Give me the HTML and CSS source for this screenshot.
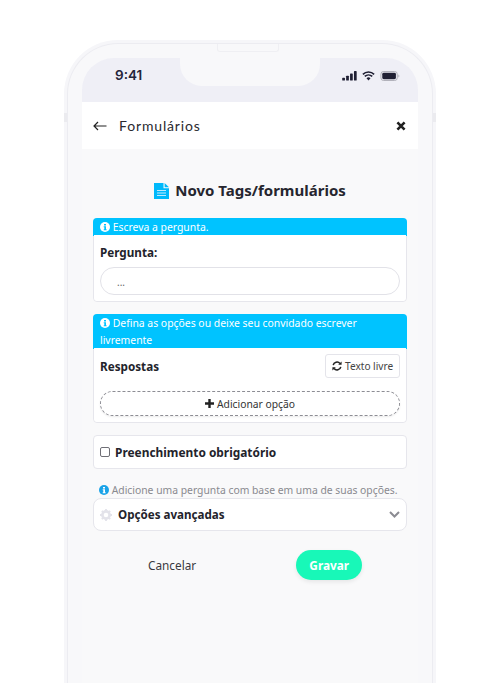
FILE: index.html
```html
<!DOCTYPE html>
<html lang="pt">
<head>
<meta charset="utf-8">
<title>Formulários</title>
<link rel="stylesheet" href="styles.css">
</head>
<body>
<div class="phone">
  <span class="tick tick-left"></span>
  <span class="tick tick-right"></span>
  <span class="speaker"></span>
  <div class="bezel">
    <div class="screen">
      <div class="status">
        <span class="time">9:41</span>
        <div class="notch"></div>
        <div class="status-icons">
          <svg width="15" height="10" viewBox="0 0 16 11"><rect x="0" y="7.5" width="3" height="3" rx=".7"/><rect x="4.3" y="5.2" width="3" height="5.3" rx=".7"/><rect x="8.6" y="2.7" width="3" height="7.8" rx=".7"/><rect x="12.9" y="0" width="3" height="10.5" rx=".7"/></svg>
          <svg width="13" height="10" viewBox="0 0 15 11"><path d="M1 3.6a9.3 9.3 0 0 1 13 0M3.2 6a6.2 6.2 0 0 1 8.6 0" fill="none" stroke="#1f1f33" stroke-width="1.8"/><path d="M5.2 8.2a3.2 3.2 0 0 1 4.6 0L7.5 10.6z"/></svg>
          <svg width="20" height="10" viewBox="0 0 21 11"><rect x=".5" y=".5" width="18" height="10" rx="3" fill="none" stroke="#a9a9b3"/><rect x="2" y="2" width="15" height="7" rx="1.6"/><path d="M19.8 3.8c.7.3.9 1 .9 1.7s-.2 1.4-.9 1.7z" fill="#a9a9b3"/></svg>
        </div>
      </div>
      <header class="topbar">
        <div class="topbar-left">
          <svg class="back" width="14" height="10" viewBox="0 0 14 10"><path d="M5 1 1 5l4 4M1 5h12.5" fill="none" stroke="#222" stroke-width="1.2"/></svg>
          <span class="topbar-title">Formulários</span>
        </div>
        <svg width="10" height="10" viewBox="0 0 10 10"><path d="M1.4 1.4l7.2 7.2M8.6 1.4 1.4 8.6" stroke="#222" stroke-width="2.6" fill="none"/></svg>
      </header>
      <main class="content">
        <h1 class="title">
          <svg width="15" height="16" viewBox="0 0 15 16"><path d="M0 0h9.5v5.2H15V16H0z" fill="#00b9fb"/><path d="M10.6 0 15 4.2h-4.4z" fill="#00b9fb"/><path d="M3 7.5h9M3 10h9M3 12.5h9" stroke="#bfeaff" stroke-width="1"/></svg>
          Novo Tags/formulários
        </h1>

        <section class="card">
          <div class="notice"><svg class="info" viewBox="0 0 10 10"><circle cx="5" cy="5" r="5" fill="#fff"/><path d="M4 2h2v1.6H4zM3.7 4.3H6v3h.6v.9H3.7v-.9h.6V5.2h-.6z" fill="#00c3ff"/></svg> Escreva a pergunta.</div>
          <div class="card-body">
            <label class="strong q-label">Pergunta:</label>
            <div class="input">...</div>
          </div>
        </section>

        <section class="card">
          <div class="notice"><svg class="info" viewBox="0 0 10 10"><circle cx="5" cy="5" r="5" fill="#fff"/><path d="M4 2h2v1.6H4zM3.7 4.3H6v3h.6v.9H3.7v-.9h.6V5.2h-.6z" fill="#00c3ff"/></svg> Defina as opções ou deixe seu convidado escrever livremente</div>
          <div class="card-body answers">
            <div class="answers-row">
              <span class="strong">Respostas</span>
              <button class="free-btn"><svg width="10" height="10" viewBox="0 0 10 10"><path d="M1.2 4.2A3.9 3.9 0 0 1 8 2.4M8.8 5.8A3.9 3.9 0 0 1 2 7.6" fill="none" stroke="#222" stroke-width="1.5"/><path d="M9.6.4v3.4H6.2zM.4 9.6V6.2h3.4z" fill="#222"/></svg> Texto livre</button>
            </div>
            <button class="add-btn"><svg width="9" height="9" viewBox="0 0 9 9"><path d="M4.5 0v9M0 4.5h9" stroke="#222" stroke-width="2.4"/></svg> Adicionar opção</button>
          </div>
        </section>

        <label class="card check-card">
          <span class="box"></span>
          <span class="strong wide">Preenchimento obrigatório</span>
        </label>

        <p class="hint"><svg class="info" viewBox="0 0 10 10"><circle cx="5" cy="5" r="5" fill="#1aa3e8"/><path d="M4 2h2v1.6H4zM3.7 4.3H6v3h.6v.9H3.7v-.9h.6V5.2h-.6z" fill="#fff"/></svg> Adicione uma pergunta com base em uma de suas opções.</p>

        <div class="card advanced">
          <div class="advanced-left">
            <svg width="12" height="12" viewBox="0 0 12 12"><circle cx="6" cy="6" r="3.6" fill="none" stroke="#e3e3ea" stroke-width="2.6"/><path d="M6 0v2M6 10v2M0 6h2M10 6h2M1.8 1.8l1.4 1.4M8.8 8.8l1.4 1.4M10.2 1.8 8.8 3.2M3.2 8.8l-1.4 1.4" stroke="#e3e3ea" stroke-width="1.8"/></svg>
            <span class="strong adv-label">Opções avançadas</span>
          </div>
          <svg width="11" height="7" viewBox="0 0 11 7"><path d="M1 1l4.5 4.5L10 1" fill="none" stroke="#8b8b92" stroke-width="2"/></svg>
        </div>

        <div class="actions">
          <button class="cancel">Cancelar</button>
          <button class="save">Gravar</button>
        </div>
      </main>
    </div>
  </div>
</div>
</body>
</html>
```

FILE: styles.css
```css
* { box-sizing: border-box; }
html, body { margin: 0; height: 683px; overflow: hidden; background: #fff; }
body { font-family: "Noto Sans", sans-serif; color: #23232b; padding-top: 40px; }
svg { display: block; flex: none; }
button { font-family: inherit; }

.phone {
  position: relative;
  width: 372px;
  height: 643px;
  margin-left: 64px;
  padding: 3px 3px 0;
  border-radius: 54px 54px 0 0;
  background: #f6f6f9;
}
.tick { position: absolute; top: 73px; width: 3px; height: 9px; background: #ebebef; }
.tick-left { left: 0; }
.tick-right { right: 0; }
.speaker {
  position: absolute;
  top: 4px;
  left: 153px;
  width: 62px;
  height: 8px;
  border: 1px solid #efeff3;
  border-top: 0;
  border-radius: 0 0 3px 3px;
}
.bezel {
  height: 100%;
  padding: 14px 14px 0;
  border: 1px solid #ececf1;
  border-bottom: 0;
  border-radius: 51px 51px 0 0;
  background: #f8f8fa;
}
.screen {
  height: 100%;
  border-radius: 32px 32px 0 0;
  overflow: hidden;
  background: #f9f9fa;
}

.status {
  height: 44px;
  background: #efeff6;
  display: grid;
  grid-template-columns: 1fr 140px 1fr;
  align-items: start;
}
.time {
  font-family: Inter, sans-serif;
  font-size: 13.5px;
  font-weight: 600;
  line-height: 17px;
  margin: 9px 0 0 33px;
  color: #24243a;
}
.notch {
  height: 28px;
  background: #f8f8fa;
  border-radius: 0 0 22px 22px;
}
.status-icons {
  display: flex;
  align-items: center;
  justify-content: flex-end;
  gap: 5px;
  margin: 13px 18px 0 0;
  fill: #1f1f33;
}

.topbar {
  height: 47px;
  background: #fff;
  display: flex;
  align-items: center;
  justify-content: space-between;
  padding: 0 12px 0 11px;
}
.topbar-left { display: flex; align-items: center; gap: 12px; }
.topbar-title { font-family: Lato, sans-serif; font-size: 14px; letter-spacing: .85px; color: #2a2a30; }

.content { padding: 0 11px; }
.title {
  display: flex;
  justify-content: center;
  align-items: center;
  gap: 6px;
  margin: 32px 0 18px;
  font-size: 15px;
  line-height: 19px;
  font-weight: 700;
  color: #26262e;
}

.card {
  background: #fff;
  border: 1px solid #e6e6ec;
  border-radius: 4px;
  margin-bottom: 12px;
}
.notice {
  background: #00c3ff;
  color: #fff;
  font-size: 10.4px;
  line-height: 17px;
  padding: 1px 7px 0;
  margin: -1px -1px -1px;
  border-radius: 4px 4px 0 0;
}
.info { display: inline-block; width: 10px; height: 10px; vertical-align: -1px; }
.strong { font-size: 11.7px; font-weight: 700; color: #23232b; }
.card-body {
  position: relative;
  padding: 7px 6px 6px;
  background: #fff;
  border-radius: 0 0 4px 4px;
}
.q-label { display: block; line-height: 20px; margin-bottom: 5px; }
.input {
  height: 28px;
  border: 1px solid #e2e2e8;
  border-radius: 14px;
  padding: 0 16px;
  font-size: 10px;
  line-height: 29px;
  color: #666;
}
.answers { padding-top: 6px; }
.answers-row { display: flex; justify-content: space-between; align-items: center; margin-bottom: 13px; }
.free-btn {
  display: flex;
  align-items: center;
  gap: 3px;
  width: 75px;
  height: 24px;
  padding: 0 6px;
  border: 1px solid #e4e4ea;
  border-radius: 3px;
  background: #fff;
  color: #444;
  font-size: 10.1px;
  white-space: nowrap;
}
.add-btn {
  display: flex;
  justify-content: center;
  align-items: center;
  gap: 3px;
  width: 100%;
  height: 25px;
  border: 1px dashed #8d8d94;
  border-radius: 13px;
  background: #fff;
  color: #333;
  font-size: 10.3px;
  box-shadow: 0 1px 2px rgba(0, 0, 0, .08);
}

.check-card {
  display: flex;
  align-items: center;
  gap: 5px;
  height: 34px;
  padding: 0 6px;
  margin-bottom: 14px;
}
.box { width: 10px; height: 10px; border: 1px solid #6f6f76; border-radius: 2px; }
.wide { font-size: 11.9px; }

.hint { margin: 0 0 1px; padding-left: 6px; font-size: 10.35px; line-height: 14px; color: #8a8a90; white-space: nowrap; }

.advanced {
  display: flex;
  justify-content: space-between;
  align-items: center;
  height: 33px;
  padding: 0 6px;
  border-radius: 8px;
  margin: 0 0 19px;
}
.advanced-left { display: flex; align-items: center; gap: 6px; }
.adv-label { font-size: 11.6px; }

.actions { display: flex; align-items: center; padding-left: 55px; gap: 100px; }
.cancel { border: 0; background: none; padding: 0; font-size: 11.8px; color: #3a3a40; }
.save {
  width: 66px;
  height: 30px;
  border: 0;
  border-radius: 15px;
  background: #18f8b8;
  color: #fff;
  font-size: 11.8px;
  font-weight: 700;
  box-shadow: 0 2px 4px rgba(0, 0, 0, .08);
}
```
